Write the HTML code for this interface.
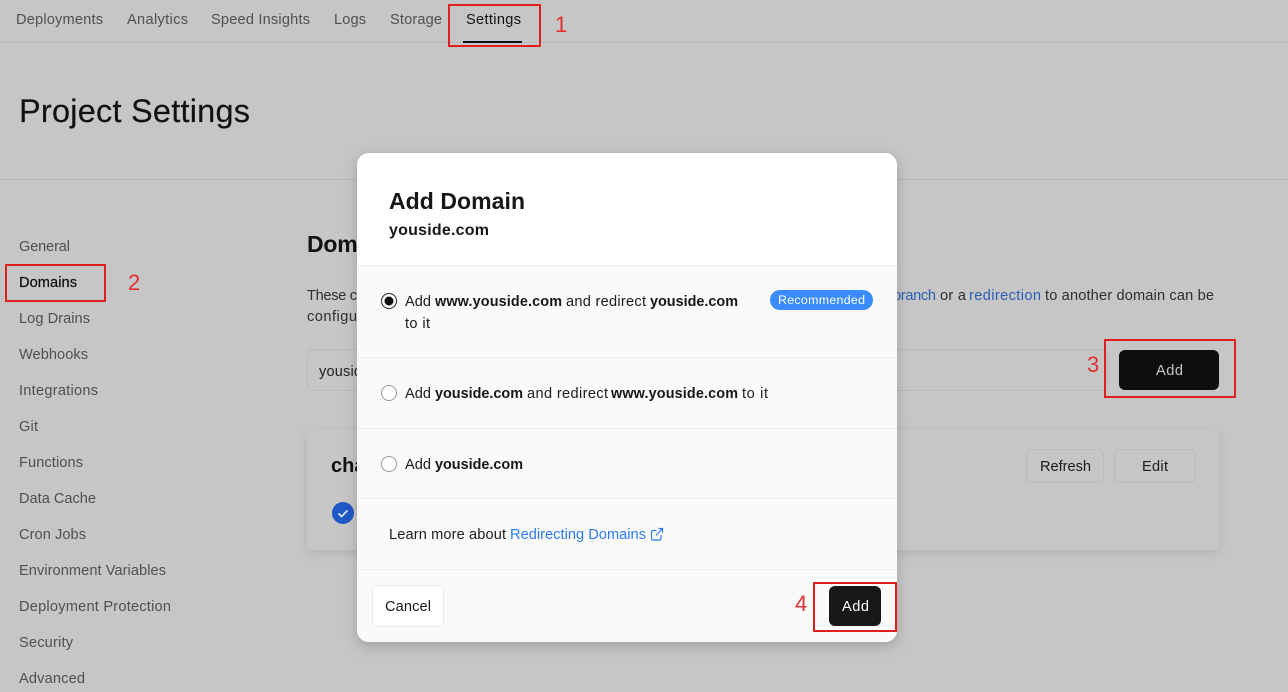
<!DOCTYPE html>
<html lang="en">
<head>
<meta charset="utf-8">
<title>Add Domain</title>
<style>
html,body{margin:0;padding:0;background:#c6c6c6;width:1288px;height:692px;overflow:hidden}
svg{display:block;position:absolute;left:0;top:0}
text{font-family:"Liberation Sans",sans-serif;font-size:14.6px}
.n{fill:#505050}
.d{fill:#1c1c1c}
.m{fill:#2e2e2e}
.b{fill:#171717;font-weight:bold;font-size:14.4px}
.r{fill:#e33030;font-size:22px}
.bx{fill:none;stroke:#e01f1f;stroke-width:2}
.l{stroke:#ebebeb;stroke-width:1}
</style>
</head>
<body>
<svg width="1288" height="692" viewBox="0 0 1288 692" xmlns="http://www.w3.org/2000/svg">
<defs>
<filter id="cs" x="-5%" y="-20%" width="110%" height="140%"><feDropShadow dx="0" dy="3" stdDeviation="5" flood-color="#000" flood-opacity=".1"/></filter>
<filter id="ms" x="-10%" y="-10%" width="120%" height="120%"><feDropShadow dx="0" dy="4" stdDeviation="7" flood-color="#000" flood-opacity=".2"/></filter>
<clipPath id="mc"><rect x="357" y="153" width="540" height="489" rx="12"/></clipPath>
</defs>
<rect width="1288" height="692" fill="#c6c6c6"/>

<!-- top nav -->
<rect x="0" y="42" width="1288" height="1" fill="#b8b8b8"/>
<text class="n" x="16" y="24" textLength="87">Deployments</text>
<text class="n" x="127" y="24" textLength="61">Analytics</text>
<text class="n" x="211" y="24" textLength="99">Speed Insights</text>
<text class="n" x="334" y="24" textLength="32">Logs</text>
<text class="n" x="390" y="24" textLength="52">Storage</text>
<text fill="#111" x="466" y="24" textLength="55">Settings</text>
<rect x="463" y="41" width="59" height="2" fill="#0d0d0d"/>

<text fill="#111" stroke="#111" stroke-width=".15" x="19" y="122" style="font-size:32.500px" textLength="231">Project Settings</text>
<rect x="0" y="179" width="1288" height="1" fill="#b8b8b8"/>

<!-- sidebar -->
<text class="n" x="19" y="251" textLength="51">General</text>
<text fill="#111" stroke="#111" stroke-width=".25" x="19" y="287" textLength="58">Domains</text>
<text class="n" x="19" y="323" textLength="71">Log Drains</text>
<text class="n" x="19" y="359" textLength="69">Webhooks</text>
<text class="n" x="19" y="395" textLength="79">Integrations</text>
<text class="n" x="19" y="431" textLength="19">Git</text>
<text class="n" x="19" y="467" textLength="64">Functions</text>
<text class="n" x="19" y="503" textLength="77">Data Cache</text>
<text class="n" x="19" y="539" textLength="67">Cron Jobs</text>
<text class="n" x="19" y="575" textLength="147">Environment Variables</text>
<text class="n" x="19" y="611" textLength="152">Deployment Protection</text>
<text class="n" x="19" y="647" textLength="54">Security</text>
<text class="n" x="19" y="683" textLength="66">Advanced</text>

<!-- main -->
<text fill="#111" x="307" y="252" style="font-size:23px;font-weight:bold" textLength="96">Domains</text>
<text class="m" x="307" y="300" textLength="50">These c</text>
<text fill="#2a5fb4" x="893" y="300" textLength="43">branch</text>
<text class="m" x="940" y="300" textLength="26">or a</text>
<text fill="#2a5fb4" x="969" y="300" textLength="72">redirection</text>
<text class="m" x="1045" y="300" textLength="169">to another domain can be</text>
<text class="m" x="307" y="321" textLength="50">configu</text>
<rect x="307.500" y="349.500" width="800" height="41" rx="6" fill="#c6c6c6" stroke="#b9b9b9"/>
<text fill="#222" x="319" y="376" textLength="43">yousid</text>
<rect x="1119" y="350" width="100" height="40" rx="6" fill="#0e0e0e"/>
<text fill="#c6c6c6" x="1156" y="375" textLength="27">Add</text>

<g filter="url(#cs)"><rect x="307" y="430" width="912" height="120" rx="6" fill="#c6c6c6"/></g>
<text fill="#111" x="331" y="472" style="font-size:20px;font-weight:bold">chat</text>
<rect x="1026.500" y="449.500" width="77" height="33" rx="6" fill="#c6c6c6" stroke="#b9b9b9"/>
<text fill="#1c1c1c" x="1040" y="471" textLength="51">Refresh</text>
<rect x="1114.500" y="449.500" width="81" height="33" rx="6" fill="#c6c6c6" stroke="#b9b9b9"/>
<text fill="#1c1c1c" x="1142" y="471" textLength="26">Edit</text>
<circle cx="343" cy="513" r="11" fill="#2058c6"/>
<path d="M338.500 513.500l3 3 6-6" fill="none" stroke="#dfe6f5" stroke-width="1.600"/>

<!-- modal -->
<g filter="url(#ms)"><rect x="357" y="153" width="540" height="489" rx="12" fill="#fff"/></g>
<g clip-path="url(#mc)">
<rect x="357" y="265" width="540" height="377" fill="#fafafa"/>
<line class="l" x1="357" x2="897" y1="265.500" y2="265.500"/>
<line class="l" x1="357" x2="897" y1="357.500" y2="357.500"/>
<line class="l" x1="357" x2="897" y1="428.500" y2="428.500"/>
<line class="l" x1="357" x2="897" y1="498.500" y2="498.500"/>
<line class="l" x1="357" x2="897" y1="569.500" y2="569.500"/>
</g>
<text fill="#171717" x="389" y="209" style="font-size:23px;font-weight:bold" textLength="136">Add Domain</text>
<text class="b" x="389" y="235" style="font-size:16px" textLength="100">youside.com</text>

<circle cx="389" cy="301" r="7.500" fill="#fff" stroke="#222" stroke-width="1"/>
<circle cx="389" cy="301" r="4.500" fill="#111"/>
<text class="d" x="405" y="306" textLength="26">Add</text>
<text class="b" x="435" y="306" textLength="127">www.youside.com</text>
<text class="d" x="566" y="306" textLength="80">and redirect</text>
<text class="b" x="650" y="306" textLength="88">youside.com</text>
<text class="d" x="405" y="328" textLength="25">to it</text>
<rect x="770" y="290" width="103" height="20" rx="10" fill="#3a8bfd"/>
<text fill="#fff" x="778" y="304" style="font-size:12.400px" textLength="87">Recommended</text>

<circle cx="389" cy="393" r="7.500" fill="#fff" stroke="#999" stroke-width="1"/>
<text class="d" x="405" y="398" textLength="26">Add</text>
<text class="b" x="435" y="398" textLength="88">youside.com</text>
<text class="d" x="527" y="398" textLength="81">and redirect</text>
<text class="b" x="611" y="398" textLength="127">www.youside.com</text>
<text class="d" x="742" y="398" textLength="26">to it</text>

<circle cx="389" cy="464" r="7.500" fill="#fff" stroke="#999" stroke-width="1"/>
<text class="d" x="405" y="469" textLength="26">Add</text>
<text class="b" x="435" y="469" textLength="88">youside.com</text>

<text class="d" x="389" y="539" textLength="117">Learn more about</text>
<text fill="#2a7bf0" x="510" y="539" textLength="136">Redirecting Domains</text>
<path d="M656.500 530.500h-3.500a1.500 1.500 0 0 0-1.500 1.500v6.500a1.500 1.500 0 0 0 1.500 1.500h6.500a1.500 1.500 0 0 0 1.500-1.500v-3.500M656 535.500l6.500-7M658.500 528.500h4v4" fill="none" stroke="#2a7bf0" stroke-width="1.200"/>

<rect x="372.500" y="585.500" width="71" height="41" rx="6" fill="#fff" stroke="#eaeaea"/>
<text fill="#171717" x="385" y="611" textLength="46">Cancel</text>
<rect x="829" y="586" width="52" height="40" rx="6" fill="#171717"/>
<text fill="#fff" x="842" y="611" textLength="27">Add</text>

<!-- annotations -->
<rect class="bx" x="449" y="5" width="91" height="41"/>
<rect class="bx" x="6" y="265" width="99" height="36"/>
<rect class="bx" x="1105" y="340" width="130" height="57"/>
<rect class="bx" x="814" y="583" width="82" height="48"/>
<text class="r" x="555" y="32" textLength="12">1</text>
<text class="r" x="128" y="290" textLength="12">2</text>
<text class="r" x="1087" y="372" textLength="12">3</text>
<text class="r" x="795" y="611" textLength="13">4</text>
</svg>
</body>
</html>
